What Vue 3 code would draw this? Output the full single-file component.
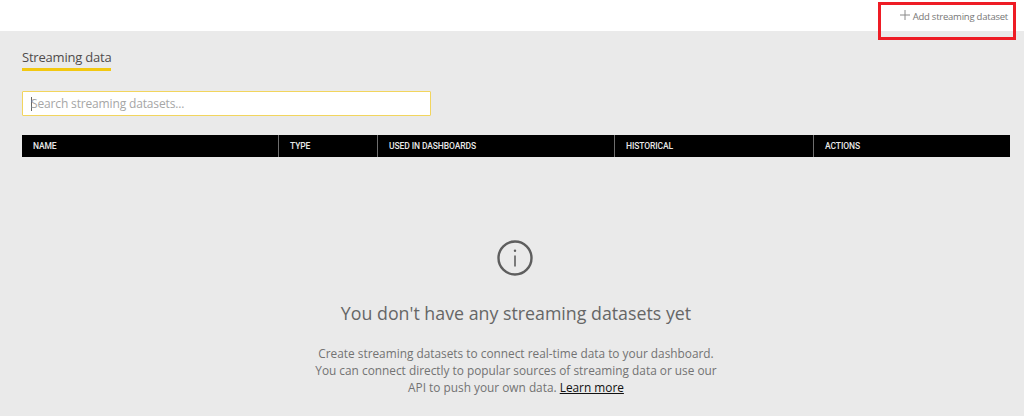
<template>
  <div class="page">
    <header class="topbar">
      <button class="add" type="button">
        <svg class="plus" width="10" height="10" viewBox="0 0 10 10"><path d="M5 0v10M0 5h10" stroke="#8a8a8a" stroke-width="1" fill="none" /></svg>
        <span>Add streaming dataset</span>
      </button>
      <div class="highlight"></div>
    </header>
    <main class="main">
      <div class="tabs"><span class="tab">Streaming data</span></div>
      <div class="search">
        <span class="caret"></span>
        <span class="placeholder">Search streaming datasets...</span>
      </div>
      <div class="thead">
        <div v-for="c in columns" :key="c.name" class="th" :style="{ width: c.width + 'px' }">{{ c.name }}</div>
      </div>
      <section class="empty">
        <svg class="info" width="36" height="36" viewBox="0 0 36 36">
          <circle cx="18" cy="18" r="16.5" fill="none" stroke="#5e5e5e" stroke-width="2.4" />
          <path d="M18 15.5v11" stroke="#5e5e5e" stroke-width="1.6" fill="none" />
          <circle cx="18" cy="10.8" r="1.2" fill="#5e5e5e" />
        </svg>
        <h2 class="heading">You don't have any streaming datasets yet</h2>
        <p class="copy">
          Create streaming datasets to connect real-time data to your dashboard.<br />
          You can connect directly to popular sources of streaming data or use our<br />
          API to push your own data. <a class="link" href="#">Learn more</a>
        </p>
      </section>
    </main>
  </div>
</template>

<script setup>
const columns = [
  { name: 'NAME', width: 257 },
  { name: 'TYPE', width: 99 },
  { name: 'USED IN DASHBOARDS', width: 237 },
  { name: 'HISTORICAL', width: 199 },
  { name: 'ACTIONS', width: 196 }
]
</script>

<style>
html, body { margin: 0; overflow: hidden; }
</style>

<style scoped>
.page {
  width: 1024px;
  height: 416px;
  overflow: hidden;
  display: flex;
  flex-direction: column;
  font-family: "Open Sans", "Noto Sans", sans-serif;
  background: #eaeaea;
}
.topbar {
  position: relative;
  height: 31px;
  flex: none;
  background: #fff;
  display: flex;
  justify-content: flex-end;
  box-sizing: border-box;
  padding: 10px 16px 0 0;
}
.add {
  display: flex;
  align-items: center;
  gap: 3px;
  height: 12px;
  border: 0;
  padding: 0;
  background: none;
  font: inherit;
  font-size: 9.5px;
  letter-spacing: -0.23px;
  color: #767676;
  white-space: nowrap;
}
.plus { margin-top: -2px; }
.highlight {
  position: absolute;
  left: 878px;
  top: 2px;
  width: 138px;
  height: 38px;
  box-sizing: border-box;
  border: 3px solid #ee1c25;
}
.main {
  flex: 1;
  padding: 16px 14px 0 22px;
  display: flex;
  flex-direction: column;
  align-items: flex-start;
}
.tabs { display: flex; }
.tab {
  font-size: 13px;
  letter-spacing: -0.2px;
  line-height: 20px;
  color: #4f4b4b;
  padding-bottom: 1px;
  border-bottom: 3px solid #f2c811;
  width: 89px;
  white-space: nowrap;
}
.search {
  margin-top: 20px;
  width: 409px;
  height: 25px;
  box-sizing: border-box;
  border: 1px solid #f2d55e;
  border-radius: 1px;
  background: #fff;
  display: flex;
  align-items: center;
  padding-left: 8px;
}
.caret { width: 1px; height: 14px; background: #666; flex: none; margin-right: -1px; }
.placeholder { font-size: 12px; letter-spacing: -0.15px; color: #a6a6a6; white-space: nowrap; }
.thead {
  margin-top: 19px;
  display: flex;
  width: 988px;
  height: 22px;
  background: #000;
}
.th {
  box-sizing: border-box;
  flex: none;
  height: 22px;
  line-height: 22px;
  padding-left: 11px;
  border-right: 1px solid #6e6e6e;
  font-family: Roboto, "Liberation Sans", sans-serif;
  font-size: 8.5px;
  font-weight: 500;
  letter-spacing: -0.1px;
  color: #e8e8e8;
  white-space: nowrap;
}
.th:last-child { border-right: 0; }
.empty {
  align-self: center;
  margin: 83px 0 0 0;
  width: 988px;
  display: flex;
  flex-direction: column;
  align-items: center;
}
.info { display: block; margin-left: -2px; }
.heading {
  margin: 25px 0 0;
  font-size: 17.8px;
  line-height: 24px;
  font-weight: 400;
  color: #666;
}
.copy {
  margin: 20px 0 0;
  font-size: 11.85px;
  line-height: 17px;
  color: #737373;
  text-align: center;
}
.link { color: #111; text-decoration: underline; }
</style>
